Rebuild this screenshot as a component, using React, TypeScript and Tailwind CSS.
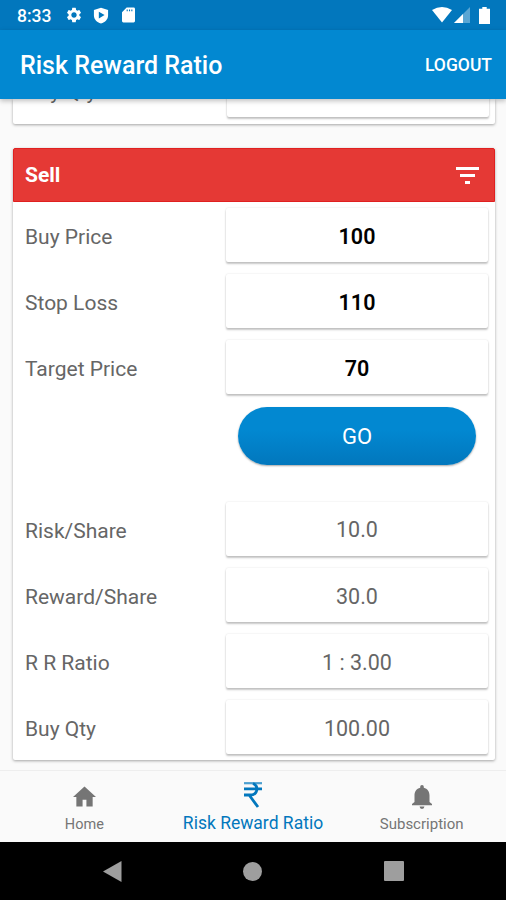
import React from 'react';

type RowProps = { label: string; value: string; strong?: boolean };

const StatusBar: React.FC = () => (
  <div className="h-[30px] shrink-0 bg-[#0277bd] flex items-center justify-between text-white">
    <div className="flex items-center pl-[17px]">
      <span className="w-[48px] pt-px text-[17.500px] leading-[30px] font-medium">8:33</span>
      <svg className="w-[18px] h-[18px]" viewBox="0 0 24 24" fill="currentColor">
        <path d="M19.14 12.94c.04-.3.06-.61.06-.94 0-.32-.02-.64-.07-.94l2.03-1.58a.49.49 0 0 0 .12-.61l-1.92-3.32a.488.488 0 0 0-.59-.22l-2.39.96c-.5-.38-1.03-.7-1.62-.94l-.36-2.54a.484.484 0 0 0-.48-.41h-3.84c-.24 0-.43.17-.47.41l-.36 2.54c-.59.24-1.13.57-1.62.94l-2.39-.96c-.22-.08-.47 0-.59.22L2.740 8.870c-.12.21-.08.47.12.61l2.03 1.58c-.05.3-.09.63-.09.94s.02.64.07.94l-2.03 1.58a.49.49 0 0 0-.12.61l1.92 3.320c.12.22.37.29.59.22l2.39-.96c.5.38 1.030.7 1.620.94l.36 2.540c.05.24.24.41.48.41h3.840c.24 0 .44-.17.47-.41l.36-2.540c.59-.24 1.130-.56 1.620-.94l2.390.96c.22.08.47 0 .59-.22l1.920-3.320c.12-.22.07-.47-.12-.61l-2.010-1.580zM12 15.600c-1.980 0-3.600-1.620-3.600-3.600s1.620-3.600 3.600-3.600 3.600 1.620 3.600 3.600-1.620 3.600-3.600 3.600z" />
      </svg>
      <svg className="w-[16px] h-[17px] ml-[10px]" viewBox="0 0 16 18" fill="currentColor" fillRule="evenodd">
        <path d="M8 .7 15.500 3.300V9c0 4-3 7-7.500 8.600C3.500 16 .5 13 .5 9V3.300zM5.700 5v7.200L11.800 8.600z" />
      </svg>
      <svg className="w-[13px] h-[16px] ml-[13px]" viewBox="0 0 14 16" fill="currentColor" fillRule="evenodd">
        <path d="M5 0h7.500Q14 0 14 1.500v13q0 1.500-1.500 1.500h-11Q0 16 0 14.500V5zM5 2v2h1.200V2zM7.500 2v2h1.200V2zM10 2v2h1.200V2z" />
      </svg>
    </div>
    <div className="flex items-center pr-[16px]">
      <svg className="w-[20px] h-[16px]" viewBox="0 0 20 16" fill="currentColor">
        <path d="M0 3Q10-3 20 3L10 15.500z" />
      </svg>
      <svg className="w-[16px] h-[16px] ml-[2px]" viewBox="0 0 16 16" fill="currentColor">
        <path d="M16 0v16H0z" opacity=".35" />
        <path d="M9 7v9H0z" />
      </svg>
      <svg className="w-[11px] h-[17px] ml-[9px]" viewBox="0 0 11 17" fill="currentColor">
        <path d="M3.300 0h4.400v1.700H11V17H0V1.700h3.300z" />
      </svg>
    </div>
  </div>
);

const Row: React.FC<RowProps> = ({ label, value, strong }) => (
  <div className="h-[66.2px] flex items-start text-[21px] text-[#666]">
    <span className="w-[201px] shrink-0 leading-[58px]">{label}</span>
    <div
      className={`w-[262px] h-[54px] pt-[4px] rounded-[2px] bg-white flex items-center justify-center text-[21.500px] shadow-[0_2px_2px_rgba(0,0,0,0.22),0_0_2px_rgba(0,0,0,0.13)] ${
        strong ? 'font-semibold text-black' : ''
      }`}
    >
      {value}
    </div>
  </div>
);

export default function App() {
  return (
    <div className="w-[506px] h-[900px] flex flex-col overflow-hidden bg-[#fafafa] font-['Roboto',sans-serif]">
      <StatusBar />
      <header className="relative z-10 h-[69px] shrink-0 flex items-center justify-between bg-[#0288d1] pl-[20px] pr-[14px] pt-[2px] text-white shadow-[0_2px_5px_rgba(0,0,0,0.25)]">
        <h1 className="text-[25px] font-medium">Risk Reward Ratio</h1>
        <span className="text-[17.500px] font-medium">LOGOUT</span>
      </header>

      <main className="h-[671px] shrink-0 overflow-hidden pl-[12.500px] pr-[11.500px]">
        {/* Tail of the Buy card, scrolled under the header */}
        <div className="h-[25px] flex flex-col justify-end overflow-hidden rounded-b-[2px] bg-white pl-[13px] shadow-[0_1px_3px_rgba(0,0,0,0.35)]">
          <div className="h-[61px] shrink-0">
            <Row label="Buy Qty" value="50.00" />
          </div>
        </div>

        {/* Sell card */}
        <section className="mt-[24px] h-[612px] rounded-[2px] bg-white shadow-[0_1px_3px_rgba(0,0,0,0.35)]">
          <div className="h-[54px] flex items-center justify-between rounded-t-[2px] border border-[#e02020] bg-[#e53935] pl-[11.500px] pr-[15px] pt-[2px] text-white">
            <h2 className="text-[21px] font-bold">Sell</h2>
            <svg className="w-[23px] h-[18px]" viewBox="0 0 23 18" fill="currentColor">
              <path d="M0 0h23v3H0zM4 7h15v3H4zM9 14h5v3H9z" />
            </svg>
          </div>
          <div className="pl-[12.500px] pt-[6px]">
            <Row label="Buy Price" value="100" strong />
            <Row label="Stop Loss" value="110" strong />
            <Row label="Target Price" value="70" strong />
            <div className="h-[95px] pl-[213px]">
              <button className="w-[238px] h-[58px] rounded-full bg-linear-to-b from-[#0288d1] from-40% to-[#0277bd] pt-px text-[22px] text-white shadow-[0_1px_2px_rgba(0,0,0,0.35)]">
                GO
              </button>
            </div>
            <Row label="Risk/Share" value="10.0" />
            <Row label="Reward/Share" value="30.0" />
            <Row label="R R Ratio" value="1 : 3.00" />
            <Row label="Buy Qty" value="100.00" />
          </div>
        </section>
      </main>

      {/* Bottom tabs */}
      <nav className="h-[72px] shrink-0 grid grid-cols-3 border-t border-[#eee] text-center text-[14.500px] text-[#757575]">
        <div className="flex flex-col items-center pt-[15px]">
          <svg className="w-[23px] h-[21px]" viewBox="0 0 24 21" fill="currentColor">
            <path d="M12 0 24 11h-3.500v10H14v-7h-4v7H3.500V11H0z" />
          </svg>
          <span className="mt-[8px] leading-[20px]">Home</span>
        </div>
        <div className="flex flex-col items-center pt-[10px] text-[#0277bd]">
          <svg className="w-[20px] h-[27px]" viewBox="0 0 20 27" fill="none" stroke="currentColor">
            <path d="M1 2.200h18" strokeWidth="2.200" opacity=".7" />
            <path d="M1 7.800h18M1 14h6c8 0 9-9 3-11.500M6.500 14.500 15 26" strokeWidth="2.800" />
          </svg>
          <span className="mt-[5px] whitespace-nowrap text-[17.500px] leading-[20px]">Risk Reward Ratio</span>
        </div>
        <div className="flex flex-col items-center pt-[14px]">
          <svg className="w-[20px] h-[24px]" viewBox="0 0 20 24" fill="currentColor">
            <path d="M10 24a2.400 2.400 0 0 0 2.400-2.400H7.600A2.400 2.400 0 0 0 10 24zM17.500 17V10.500c0-3.800-2-6.900-5.700-7.700V1.800a1.800 1.800 0 0 0-3.600 0v1C4.500 3.600 2.500 6.700 2.500 10.500V17L0 19v1.200h20V19z" />
          </svg>
          <span className="mt-[5px] text-[15px] leading-[20px]">Subscription</span>
        </div>
      </nav>

      <div className="h-[58px] shrink-0 bg-black grid grid-cols-3 items-center justify-items-center px-[42px] text-[#9e9e9e]">
        <svg className="w-[19px] h-[21px]" viewBox="0 0 19 21" fill="currentColor">
          <path d="M18.500 0v21L0 10.500z" />
        </svg>
        <div className="w-[19px] h-[19px] rounded-full bg-[#9e9e9e]" />
        <div className="w-[20px] h-[20px] rounded-[1px] bg-[#9e9e9e]" />
      </div>
    </div>
  );
}
